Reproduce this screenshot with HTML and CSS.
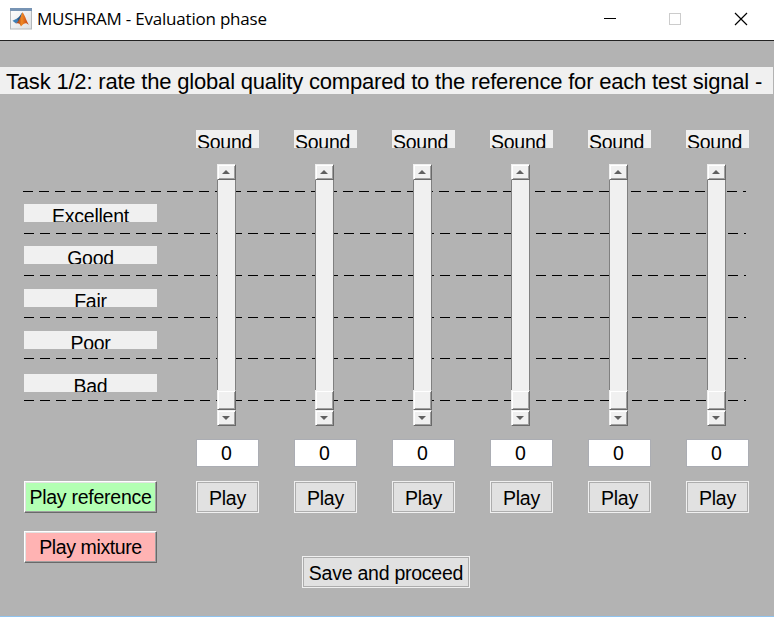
FILE: index.html
```html
<!DOCTYPE html>
<html lang="en">
<head>
<meta charset="utf-8">
<title>MUSHRAM - Evaluation phase</title>
<link rel="stylesheet" href="styles.css">
</head>
<body>
<div class="window">
  <header class="titlebar">
    <svg class="app-icon" width="22" height="22" viewBox="0 0 22 22">
      <defs>
        <linearGradient id="flame" x1="0" x2="1" y1="0" y2="0">
          <stop offset="0" stop-color="#8c1f14"/><stop offset=".45" stop-color="#f08a24"/><stop offset="1" stop-color="#c23a12"/>
        </linearGradient>
        <linearGradient id="paper" x1="0" x2="1" y1="0" y2="1">
          <stop offset="0" stop-color="#ffffff"/><stop offset="1" stop-color="#dcdfe2"/>
        </linearGradient>
      </defs>
      <rect x=".5" y=".5" width="21" height="20.5" fill="url(#paper)" stroke="#b4b8bc"/>
      <rect x="0" y="0" width="22" height="3" fill="#7794b4"/>
      <path d="M2.5 12.800 L7 10.5 L9.5 12.5 L6 15.5 Z" fill="#3f7fb5"/>
      <path d="M7 10.5 C9.500 9.500 10.500 6 12.300 4.500 L10.500 11.500 L8.500 13.500 Z" fill="#285a8c"/>
      <path d="M6 15.500 C8.500 13.500 10.500 10 12.300 4.300 C14.500 6 16 12 18.800 16.800 C16 14.500 14.500 14.500 11 18.600 C10 15.500 8.500 14.500 6 15.500 Z" fill="url(#flame)"/>
    </svg>
    <h1 class="title">MUSHRAM - Evaluation phase</h1>
    <svg class="controls" width="150" height="20" viewBox="0 0 150 20" fill="none" shape-rendering="crispEdges">
      <path d="M4 9.500H16" stroke="#000"/>
      <rect x="69.500" y="4.500" width="11" height="11" stroke="#ccc"/>
      <path d="M135 4L147 16M147 4L135 16" stroke="#000" stroke-width="1.200" shape-rendering="auto"/>
    </svg>
  </header>
  <main class="client">
    <p class="task">Task 1/2: rate the global quality compared to the reference for each test signal -</p>
    <div class="board">
      <div class="guides">
        <i class="guide first"></i><i class="guide"></i><i class="guide"></i><i class="guide"></i><i class="guide short"></i><i class="guide"></i>
      </div>
      <div class="columns">
        <div class="side">
          <div class="grade">Excellent</div>
          <div class="grade">Good</div>
          <div class="grade lower">Fair</div>
          <div class="grade">Poor</div>
          <div class="grade lower">Bad</div>
          <button class="classic green">Play reference</button>
          <button class="classic red">Play mixture</button>
        </div>
        <div class="sound"><div class="name">Sound</div><div class="slider"><span class="arrow up"></span><span class="track"></span><span class="thumb"></span><span class="arrow down"></span></div><div class="score">0</div><button class="flat">Play</button></div>
        <div class="sound"><div class="name">Sound</div><div class="slider"><span class="arrow up"></span><span class="track"></span><span class="thumb"></span><span class="arrow down"></span></div><div class="score">0</div><button class="flat">Play</button></div>
        <div class="sound"><div class="name">Sound</div><div class="slider"><span class="arrow up"></span><span class="track"></span><span class="thumb"></span><span class="arrow down"></span></div><div class="score">0</div><button class="flat">Play</button></div>
        <div class="sound"><div class="name">Sound</div><div class="slider"><span class="arrow up"></span><span class="track"></span><span class="thumb"></span><span class="arrow down"></span></div><div class="score">0</div><button class="flat">Play</button></div>
        <div class="sound"><div class="name">Sound</div><div class="slider"><span class="arrow up"></span><span class="track"></span><span class="thumb"></span><span class="arrow down"></span></div><div class="score">0</div><button class="flat">Play</button></div>
        <div class="sound"><div class="name">Sound</div><div class="slider"><span class="arrow up"></span><span class="track"></span><span class="thumb"></span><span class="arrow down"></span></div><div class="score">0</div><button class="flat">Play</button></div>
      </div>
    </div>
    <button class="flat save">Save and proceed</button>
  </main>
</div>
</body>
</html>
```
FILE: styles.css
```css
* { box-sizing: border-box; }
body { margin: 0; font-family: "Liberation Sans", Arial, sans-serif; color: #000; }
.window { display: flex; flex-direction: column; width: 774px; height: 617px; overflow: hidden; background: #b3b3b3; border-bottom: 1px solid #8fc3ef; }
.titlebar { display: flex; align-items: center; height: 41px; padding: 0 24px 2px 10px; background: #fff; border-bottom: 1px solid #222; flex: none; }
.app-icon { flex: none; }
.title { flex: 1; margin: 0 0 0 5px; font: 400 17px/24px "Open Sans", "Noto Sans", sans-serif; letter-spacing: -0.21px; white-space: nowrap; }
.controls { flex: none; }
.client { display: flex; flex-direction: column; flex: 1; padding-top: 26px; }
.task { margin: 0 1px 0 0; height: 27px; padding-left: 6px; background: #f0f0f0; font-size: 22px; line-height: 29px; letter-spacing: -0.19px; white-space: nowrap; overflow: hidden; }
.board { display: grid; height: 469px; margin-top: 36px; }
.guides, .columns { grid-area: 1 / 1; }
.guides { display: flex; flex-direction: column; gap: 41px; padding: 61px 28px 0 24px; }
.guide { height: 1px; background: repeating-linear-gradient(90deg, #000 0 10px, transparent 10px 16px); }
.guide.first { margin-left: -1px; }
.guide.short { margin-top: -1px; }
.columns { display: flex; gap: 35px; padding-left: 24px; }
.side { display: flex; flex-direction: column; width: 133px; margin-right: 4px; padding-top: 74px; }
.grade { height: 18px; margin-bottom: 24px; background: #f0f0f0; font-size: 19.5px; line-height: 25px; letter-spacing: -0.25px; text-align: center; overflow: hidden; }
.grade.lower { margin-top: 1px; }
button { display: flex; align-items: center; justify-content: center; height: 32px; padding: 0; font: 19.5px/24px "Liberation Sans", Arial, sans-serif; letter-spacing: -0.25px; color: #000; white-space: nowrap; border-radius: 0; flex: none; }
.classic { margin-bottom: 18px; padding-bottom: 1px; border: 1px solid; border-color: #fff #696969 #696969 #fff; box-shadow: inset -1px -1px #a0a0a0, inset 1px 1px #e3e3e3; }
.green { margin-top: 65px; background: #b3ffb3; }
.red { background: #ffb3b3; letter-spacing: -0.4px; }
.flat { padding-top: 2px; border: 1px solid #f0f0f0; background: #e1e1e1; box-shadow: inset 0 0 0 1px #adadad; }
.sound { display: flex; flex-direction: column; width: 63px; }
.name { height: 18px; padding-left: 1px; background: #f0f0f0; font-size: 19.5px; line-height: 25px; letter-spacing: -0.25px; overflow: hidden; }
.slider { display: flex; flex-direction: column; width: 19px; height: 262px; margin: 16px 0 0 21px; background: #f0f0f0; }
.arrow, .thumb { border: 1px solid; border-color: #f0f0f0 #696969 #696969 #f0f0f0; box-shadow: inset 1px 1px #fff, inset -1px -1px #a0a0a0; background: #f0f0f0; flex: none; }
.arrow { display: flex; align-items: center; justify-content: center; height: 16px; padding-right: 2px; }
.thumb { height: 20px; }
.arrow::before { content: ""; border: 4px solid transparent; }
.arrow.up::before { border-top: 0; border-bottom-color: #606060; }
.arrow.down::before { border-bottom: 0; border-top-color: #606060; }
.track { flex: 1; border: solid #808080; border-width: 0 1px; }
.score { height: 28px; margin: 13px 0 14px; border: 1px solid #abadb3; background: #fff; font-size: 19.5px; line-height: 27px; text-align: center; padding-right: 2px; }
.save { width: 168px; margin: -43px 0 0 302px; padding-top: 1px; }
```
